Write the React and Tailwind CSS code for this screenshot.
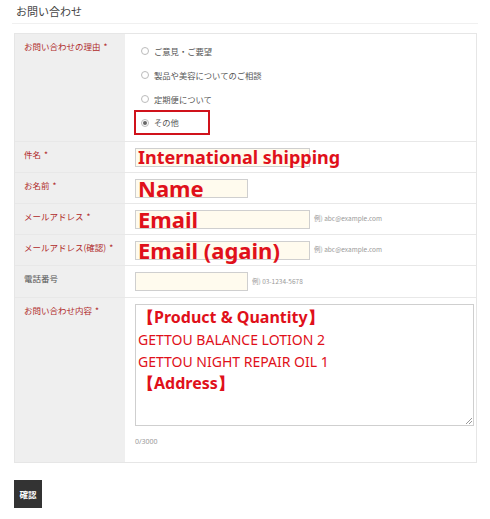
const jp = { fontFamily: '"Noto Sans CJK JP", "Noto Sans", sans-serif' };
const en = { fontFamily: '"Noto Sans", "Liberation Sans", sans-serif' };

function Label({ children, req = true, dark = false }) {
  return (
    <div className={`w-[110px] shrink-0 bg-[#efefef] pl-[9px] pt-[5px] text-[8.5px] leading-[14px] ${dark ? "text-[#555]" : "text-[#b02a2a]"}`}>
      {children}
      {req && <span className="ml-[3px]">*</span>}
    </div>
  );
}

function Radio({ label, checked }) {
  return (
    <div className="flex items-center gap-[5px] text-[8.3px] text-[#555]">
      <span className="flex h-[8px] w-[8px] items-center justify-center rounded-full border border-[#bbb] bg-white">
        {checked && <span className="h-[4px] w-[4px] rounded-full bg-[#666]" />}
      </span>
      {label}
    </div>
  );
}

function Field({ w, h = 19, children }) {
  return (
    <div className={`flex items-center border border-[#cfcfcf] bg-[#fffbee] ${w}`} style={{ height: h }}>
      {children}
    </div>
  );
}

function Hint({ children }) {
  return <span className="ml-[4px] text-[6.5px] text-[#999]">{children}</span>;
}

export default function App() {
  return (
    <main className="h-[519px] w-[490px] overflow-hidden bg-white" style={jp}>
      <div className="mx-[12px] border-b border-[#f0f0f0] pl-[4px] pt-[3px] pb-[4px] text-[11px] leading-[16px] text-[#444]">お問い合わせ</div>

      <div className="ml-[14px] mt-[9px] w-[463px] border border-[#e6e6e6]">
        {/* reason */}
        <div className="flex h-[108px] border-b border-[#e8e8e8]">
          <Label>お問い合わせの理由</Label>
          <div className="flex flex-col pl-[9px] pt-[5px]">
            <div className="flex h-[24px] items-center pl-[7px]"><Radio label="ご意見・ご要望" /></div>
            <div className="flex h-[24px] items-center pl-[7px]"><Radio label="製品や美容についてのご相談" /></div>
            <div className="flex h-[24px] items-center pl-[7px]"><Radio label="定期便について" /></div>
            <div className="mt-[-1px] flex h-[25px] w-[76px] items-center border-2 border-[#d0121b] pl-[5px]"><Radio label="その他" checked /></div>
          </div>
        </div>

        {/* subject */}
        <div className="flex h-[31px] border-b border-[#e8e8e8]">
          <Label>件名</Label>
          <div className="flex items-center pl-[10px]">
            <Field w="w-[175px]">
              <span className="whitespace-nowrap pl-[2px] text-[18px] font-bold leading-none text-[#e0101a]" style={en}>International shipping</span>
            </Field>
          </div>
        </div>

        {/* name */}
        <div className="flex h-[31px] border-b border-[#e8e8e8]">
          <Label>お名前</Label>
          <div className="flex items-center pl-[10px]">
            <Field w="w-[113px]">
              <span className="whitespace-nowrap pl-[2px] text-[22px] font-bold leading-none text-[#e0101a]" style={en}>Name</span>
            </Field>
          </div>
        </div>

        {/* email */}
        <div className="flex h-[31px] border-b border-[#e8e8e8]">
          <Label>メールアドレス</Label>
          <div className="flex items-center pl-[10px]">
            <Field w="w-[175px]">
              <span className="whitespace-nowrap pl-[2px] text-[22px] font-bold leading-none text-[#e0101a]" style={en}>Email</span>
            </Field>
            <Hint>例) abc@example.com</Hint>
          </div>
        </div>

        {/* email confirm */}
        <div className="flex h-[31px] border-b border-[#e8e8e8]">
          <Label>メールアドレス(確認)</Label>
          <div className="flex items-center pl-[10px]">
            <Field w="w-[175px]">
              <span className="whitespace-nowrap pl-[2px] text-[22px] font-bold leading-none text-[#e0101a]" style={en}>Email (again)</span>
            </Field>
            <Hint>例) abc@example.com</Hint>
          </div>
        </div>

        {/* phone */}
        <div className="flex h-[32px] border-b border-[#e8e8e8]">
          <Label req={false} dark>電話番号</Label>
          <div className="flex items-center pl-[10px]">
            <Field w="w-[113px]" />
            <Hint>例) 03-1234-5678</Hint>
          </div>
        </div>

        {/* message */}
        <div className="flex h-[164px]">
          <Label>お問い合わせ内容</Label>
          <div className="flex flex-col pl-[10px] pt-[6px]">
            <div className="relative h-[122px] w-[339px] border border-[#cfcfcf] bg-white pl-[2px] pt-[3px] text-[#e0101a]" style={en}>
              <div className="text-[16px] font-bold leading-[19px]">【Product &amp; Quantity】</div>
              <div className="mt-[2px] text-[14px] leading-[22px]">GETTOU BALANCE LOTION 2</div>
              <div className="text-[14px] leading-[22px]">GETTOU NIGHT REPAIR OIL 1</div>
              <div className="mt-[1px] text-[16px] font-bold leading-[19px]">【Address】</div>
              <svg className="absolute bottom-[1px] right-[1px]" width="6" height="6" viewBox="0 0 6 6">
                <path d="M6 0 L0 6 M6 3 L3 6" stroke="#999" strokeWidth="1" />
              </svg>
            </div>
            <div className="mt-[11px] text-[7px] text-[#999]" style={en}>0/3000</div>
          </div>
        </div>
      </div>

      <div className="ml-[14px] mt-[17px] flex h-[28px] w-[28px] items-center justify-center bg-[#333] text-[8.5px] font-bold text-white">確認</div>
    </main>
  );
}
